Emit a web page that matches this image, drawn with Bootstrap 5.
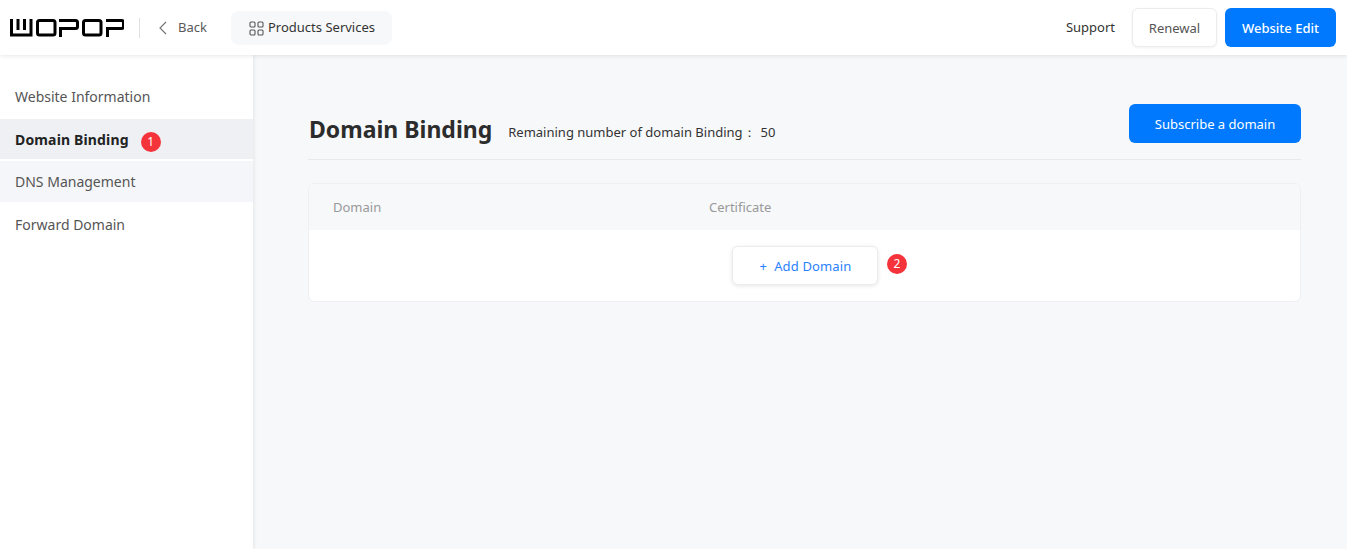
<!DOCTYPE html>
<html lang="en">
<head>
    <meta charset="UTF-8">
    <meta name="viewport" content="width=device-width, initial-scale=1.0">
    <title>Domain Binding</title>
    <link rel="stylesheet" href="https://cdn.jsdelivr.net/npm/bootstrap@5.3.0/dist/css/bootstrap.min.css">
    <style>
        html, body { height: 100%; }
        body { font-family: "Noto Sans", sans-serif; font-size: 14px; color: #333; background: #f7f8fa; overflow: hidden; }
        .top-bar { height: 55px; background: #fff; box-shadow: 0 1px 4px rgba(0,0,0,.1); padding: 0 11px 0 10px; position: relative; z-index: 2; }
        .logo-sep { width: 1px; height: 20px; background: #e2e2e2; margin: 0 18px 0 15px; }
        .back-link { color: #595959; font-size: 13px; text-decoration: none; width: 73px; }
        .back-text { margin-left: 2px; }
        .prod-btn { height: 34px; width: 161px; padding: 1px 0 0 17px; background: #f7f8fa; border-radius: 8px; color: #333; font-size: 13px; }
        .support-link { color: #333; font-size: 13px; text-decoration: none; margin-right: 17px; padding-top: 1px; }
        .btn-renewal { width: 85px; height: 39px; padding: 2px 0 0; font-size: 13px; color: #555; background: #fff; border: 1px solid #ececec; border-radius: 6px; box-shadow: 0 1px 3px rgba(0,0,0,.06); margin-right: 8px; }
        .btn-blue { background: #0079fe; border: 0; color: #fff; border-radius: 6px; padding: 2px 0 0; font-size: 13px; font-weight: 500; }
        .btn-edit { width: 111px; height: 39px; }
        .btn-sub { width: 172px; height: 39px; font-weight: 400; }
        .side-bar { width: 253px; background: #fff; box-shadow: 1px 0 4px rgba(0,0,0,.08); padding-top: 22px; flex-shrink: 0; }
        .side-item { height: 40px; padding: 0 0 2px 15px; margin-bottom: 2px; color: #555; }
        .side-item.on { padding-bottom: 0; background: #eef0f4; color: #222; font-weight: 700; letter-spacing: .15px; }
        .side-item.hov { height: 41px; padding-bottom: 0; margin-bottom: 3px; background: #f5f6f9; }
        .num-dot { width: 20px; height: 20px; border-radius: 50%; background: #f5333a; color: #fff; font-size: 12px; font-weight: 400; line-height: 20px; text-align: center; flex-shrink: 0; }
        .side-item .num-dot { margin: 5px 0 0 12px; }
        .main-area { padding: 49px 46px 0 55px; }
        .title-row { height: 56px; border-bottom: 1px solid #e8e9eb; margin-bottom: 23px; }
        .page-title { font-size: 23px; font-weight: 700; color: #2c2c2c; margin: 0 16px 0 1px; line-height: 50px; }
        .remain-text { font-size: 13px; color: #333; padding-top: 3px; }
        .remain-num { margin-left: 5px; }
        .domain-box { background: #fff; border: 1px solid #f0f0f2; border-radius: 6px; overflow: hidden; }
        .domain-head { height: 46px; padding: 2px 0 0 24px; background: #f7f8fa; color: #999; font-size: 13px; }
        .head-col { width: 376px; }
        .domain-body { height: 71px; padding: 16px 0 0 423px; }
        .btn-add { width: 146px; height: 39px; padding: 2px 0 0 1px; background: #fff; border: 1px solid #ececec; border-radius: 6px; box-shadow: 0 1px 4px rgba(0,0,0,.1); color: #2a7fff; font-size: 13px; letter-spacing: .15px; }
        .domain-body .num-dot { margin: 8px 0 0 9px; }
    </style>
</head>
<body class="d-flex flex-column">
    <header class="top-bar d-flex align-items-center">
        <svg width="114" height="19" viewBox="0 0 114 19" role="img" aria-label="Logo" fill="none" stroke="#000" stroke-width="3">
            <path d="M1.500 1v16h19.500V1M8 1v11M14.500 1v11"/>
            <rect x="27.500" y="2.500" width="17.500" height="14.500" rx="2"/>
            <path d="M49 2.500h16.500a2 2 0 0 1 2 2v4a2 2 0 0 1-2 2H50.500V19"/>
            <rect x="73.500" y="2.500" width="17.500" height="14.500" rx="2"/>
            <path d="M96 2.500h15.500a2 2 0 0 1 2 2v4a2 2 0 0 1-2 2H97.500V19"/>
        </svg>
        <span class="logo-sep"></span>
        <a class="back-link d-flex align-items-center gap-2" href="#">
            <svg width="10" height="14" viewBox="0 0 10 14" fill="none" stroke="#777" stroke-width="1.200"><path d="M8 1L2 7l6 6"/></svg>
            <span class="back-text">Back</span>
        </a>
        <button class="prod-btn btn d-flex align-items-center gap-1">
            <svg width="15" height="15" viewBox="0 0 15 15" fill="none" stroke="#555" stroke-width="1.100"><rect x="1" y="1" width="5" height="5" rx="1"/><rect x="9" y="1" width="5" height="5" rx="1"/><rect x="1" y="9" width="5" height="5" rx="1"/><rect x="9" y="9" width="5" height="5" rx="1"/></svg>
            <span>Products Services</span>
        </button>
        <div class="ms-auto d-flex align-items-center">
            <a class="support-link" href="#">Support</a>
            <button class="btn btn-renewal">Renewal</button>
            <button class="btn btn-blue btn-edit">Website Edit</button>
        </div>
    </header>

    <div class="d-flex flex-grow-1">
        <nav class="side-bar">
            <div class="side-item d-flex align-items-center">Website Information</div>
            <div class="side-item on d-flex align-items-center">Domain Binding <span class="num-dot">1</span></div>
            <div class="side-item hov d-flex align-items-center">DNS Management</div>
            <div class="side-item d-flex align-items-center">Forward Domain</div>
        </nav>
        <main class="main-area flex-grow-1">
            <div class="title-row d-flex align-items-start">
                <h1 class="page-title">Domain Binding</h1>
                <span class="remain-text align-self-center">Remaining number of domain Binding：<span class="remain-num">50</span></span>
                <button class="btn btn-blue btn-sub ms-auto">Subscribe a domain</button>
            </div>
            <div class="domain-box">
                <div class="domain-head d-flex align-items-center">
                    <div class="head-col">Domain</div>
                    <div>Certificate</div>
                </div>
                <div class="domain-body d-flex align-items-start">
                    <button class="btn btn-add">+&nbsp; Add Domain</button>
                    <span class="num-dot">2</span>
                </div>
            </div>
        </main>
    </div>
    <script src="https://cdn.jsdelivr.net/npm/bootstrap@5.3.0/dist/js/bootstrap.bundle.min.js"></script>
</body>
</html>
